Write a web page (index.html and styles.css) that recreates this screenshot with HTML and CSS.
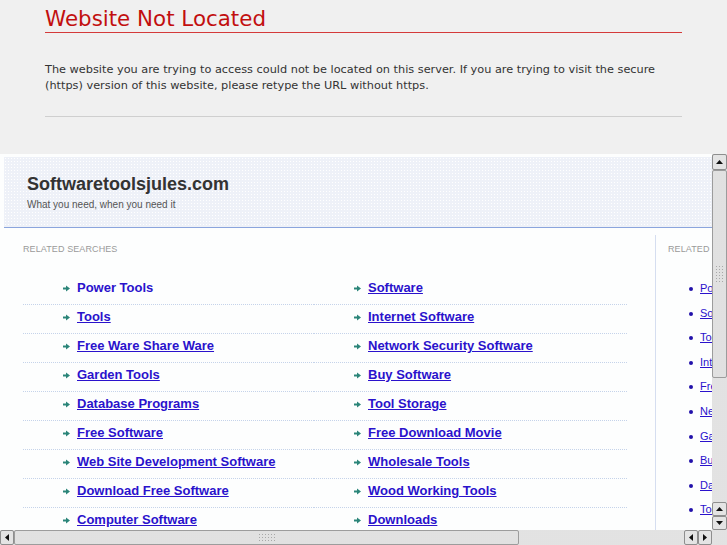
FILE: index.html
```html
<!DOCTYPE html>
<html lang="en">
<head>
    <meta charset="UTF-8">
    <title>Website Not Located</title>
    <link rel="stylesheet" href="styles.css">
</head>
<body>
    <div class="top">
        <div class="notice">
            <h1>Website Not Located</h1>
            <p>The website you are trying to access could not be located on this server. If you are trying to visit the secure (https) version of this website, please retype the URL without https.</p>
        </div>
    </div>

    <div class="frame">
        <div class="viewport">
            <div class="page">
                <div class="site-head">
                    <div class="site-name">Softwaretoolsjules.com</div>
                    <div class="tagline">What you need, when you need it</div>
                </div>

                <div class="content">
                    <div class="searches">
                        <div class="label">Related Searches</div>
                        <ul class="links">
                            <li><svg class="arrow" viewBox="0 0 7 7"><polygon points="0,2.5 3,2.5 3,0.5 7,3.5 3,6.5 3,4.5 0,4.5"/></svg><a class="hover">Power Tools</a></li>
                            <li><svg class="arrow" viewBox="0 0 7 7"><polygon points="0,2.5 3,2.5 3,0.5 7,3.5 3,6.5 3,4.5 0,4.5"/></svg><a>Software</a></li>
                            <li><svg class="arrow" viewBox="0 0 7 7"><polygon points="0,2.5 3,2.5 3,0.5 7,3.5 3,6.5 3,4.5 0,4.5"/></svg><a>Tools</a></li>
                            <li><svg class="arrow" viewBox="0 0 7 7"><polygon points="0,2.5 3,2.5 3,0.5 7,3.5 3,6.5 3,4.5 0,4.5"/></svg><a>Internet Software</a></li>
                            <li><svg class="arrow" viewBox="0 0 7 7"><polygon points="0,2.5 3,2.5 3,0.5 7,3.5 3,6.5 3,4.5 0,4.5"/></svg><a>Free Ware Share Ware</a></li>
                            <li><svg class="arrow" viewBox="0 0 7 7"><polygon points="0,2.5 3,2.5 3,0.5 7,3.5 3,6.5 3,4.5 0,4.5"/></svg><a>Network Security Software</a></li>
                            <li><svg class="arrow" viewBox="0 0 7 7"><polygon points="0,2.5 3,2.5 3,0.5 7,3.5 3,6.5 3,4.5 0,4.5"/></svg><a>Garden Tools</a></li>
                            <li><svg class="arrow" viewBox="0 0 7 7"><polygon points="0,2.5 3,2.5 3,0.5 7,3.5 3,6.5 3,4.5 0,4.5"/></svg><a>Buy Software</a></li>
                            <li><svg class="arrow" viewBox="0 0 7 7"><polygon points="0,2.5 3,2.5 3,0.5 7,3.5 3,6.5 3,4.5 0,4.5"/></svg><a>Database Programs</a></li>
                            <li><svg class="arrow" viewBox="0 0 7 7"><polygon points="0,2.5 3,2.5 3,0.5 7,3.5 3,6.5 3,4.5 0,4.5"/></svg><a>Tool Storage</a></li>
                            <li><svg class="arrow" viewBox="0 0 7 7"><polygon points="0,2.5 3,2.5 3,0.5 7,3.5 3,6.5 3,4.5 0,4.5"/></svg><a>Free Software</a></li>
                            <li><svg class="arrow" viewBox="0 0 7 7"><polygon points="0,2.5 3,2.5 3,0.5 7,3.5 3,6.5 3,4.5 0,4.5"/></svg><a>Free Download Movie</a></li>
                            <li><svg class="arrow" viewBox="0 0 7 7"><polygon points="0,2.5 3,2.5 3,0.5 7,3.5 3,6.5 3,4.5 0,4.5"/></svg><a>Web Site Development Software</a></li>
                            <li><svg class="arrow" viewBox="0 0 7 7"><polygon points="0,2.5 3,2.5 3,0.5 7,3.5 3,6.5 3,4.5 0,4.5"/></svg><a>Wholesale Tools</a></li>
                            <li><svg class="arrow" viewBox="0 0 7 7"><polygon points="0,2.5 3,2.5 3,0.5 7,3.5 3,6.5 3,4.5 0,4.5"/></svg><a>Download Free Software</a></li>
                            <li><svg class="arrow" viewBox="0 0 7 7"><polygon points="0,2.5 3,2.5 3,0.5 7,3.5 3,6.5 3,4.5 0,4.5"/></svg><a>Wood Working Tools</a></li>
                            <li><svg class="arrow" viewBox="0 0 7 7"><polygon points="0,2.5 3,2.5 3,0.5 7,3.5 3,6.5 3,4.5 0,4.5"/></svg><a>Computer Software</a></li>
                            <li><svg class="arrow" viewBox="0 0 7 7"><polygon points="0,2.5 3,2.5 3,0.5 7,3.5 3,6.5 3,4.5 0,4.5"/></svg><a>Downloads</a></li>
                        </ul>
                    </div>

                    <div class="related">
                        <div class="label">Related Searches</div>
                        <ul>
                            <li><a>Power Tools</a></li>
                            <li><a>Software</a></li>
                            <li><a>Tools</a></li>
                            <li><a>Internet Software</a></li>
                            <li><a>Free Ware Share Ware</a></li>
                            <li><a>Network Security Software</a></li>
                            <li><a>Garden Tools</a></li>
                            <li><a>Buy Software</a></li>
                            <li><a>Database Programs</a></li>
                            <li><a>Tool Storage</a></li>
                        </ul>
                    </div>
                </div>
            </div>
        </div>

        <!-- vertical scrollbar -->
        <div class="vscroll track">
            <div class="btn btn-top"><svg viewBox="0 0 7 4"><polygon points="0,4 3.5,0 7,4"/></svg></div>
            <div class="vthumb"><span class="grip"></span></div>
            <div class="fill"></div>
            <div class="btn"><svg viewBox="0 0 7 4"><polygon points="0,4 3.5,0 7,4"/></svg></div>
            <div class="btn"><svg viewBox="0 0 7 4"><polygon points="0,0 7,0 3.5,4"/></svg></div>
        </div>

        <!-- horizontal scrollbar -->
        <div class="hscroll track">
            <div class="btn"><svg class="side" viewBox="0 0 4 7"><polygon points="4,0 4,7 0,3.5"/></svg></div>
            <div class="hthumb"><span class="grip"></span></div>
            <div class="fill"></div>
            <div class="btn"><svg class="side" viewBox="0 0 4 7"><polygon points="4,0 4,7 0,3.5"/></svg></div>
            <div class="btn"><svg class="side" viewBox="0 0 4 7"><polygon points="0,0 0,7 4,3.5"/></svg></div>
        </div>

        <div class="corner track"></div>
    </div>
</body>
</html>
```

FILE: styles.css
```css
body {
    margin: 0;
    background-color: #f0f0f0;
    font-family: "DejaVu Sans", Verdana, sans-serif;
    overflow: hidden;
}

.top {
    height: 154px;
}

.notice {
    width: 637px;
    margin: 0 45px;
}

h1 {
    margin: 0;
    padding-top: 6px;
    font-size: 21.4px;
    line-height: 26px;
    font-weight: normal;
    color: #c20f0f;
    border-bottom: 1px solid #d43a3a;
}

.notice p {
    margin: 29px 0 0;
    padding-bottom: 22px;
    font-size: 11.3px;
    line-height: 16px;
    color: #333;
    border-bottom: 1px solid #cfcfcf;
}

/* framed parked page */
.frame {
    display: grid;
    grid-template-columns: 1fr 15px;
    grid-template-rows: 1fr 15px;
    height: 391px;
}

.viewport {
    overflow: hidden;
    background-color: #fdfefe;
    padding: 3px 0 0 4px;
    font-family: "Liberation Sans", Arial, sans-serif;
}

.page {
    width: 900px;
}

.site-head {
    box-sizing: border-box;
    height: 71px;
    padding: 16px 0 0 23px;
    background-color: #eef1f8;
    background-image: radial-gradient(#ffffff 0.6px, transparent 0.8px);
    background-size: 3px 3px;
    border-bottom: 1px solid #8ba5dd;
}

.site-name {
    font-size: 18px;
    line-height: 22px;
    font-weight: bold;
    color: #333;
}

.tagline {
    margin-top: 3px;
    font-size: 10px;
    line-height: 14px;
    color: #555;
}

.content {
    display: flex;
    margin-top: 7px;
}

.searches {
    box-sizing: border-box;
    width: 651px;
    padding: 8px 28px 0 19px;
}

.label {
    font-size: 9px;
    line-height: 12px;
    color: #9a9a9a;
    text-transform: uppercase;
    letter-spacing: 0.1px;
    white-space: nowrap;
}

.links {
    display: grid;
    grid-template-columns: 291px 1fr;
    margin: 21px 0 0;
    padding: 0;
    list-style: none;
}

.links li {
    display: flex;
    align-items: center;
    gap: 7px;
    padding: 4px 0 8px 40px;
    line-height: 16px;
    border-bottom: 1px dotted #c5d3ea;
}

.arrow {
    width: 7px;
    height: 7px;
    fill: #2b8579;
}

.links a {
    font-size: 13px;
    font-weight: bold;
    color: #2a12cc;
    text-decoration: underline;
}

.links a.hover {
    text-decoration: none;
}

.related {
    width: 200px;
    padding: 8px 0 0 12px;
    border-left: 1px solid #d5def0;
}

.related ul {
    margin: 21px 0 0;
    padding: 0 0 0 21px;
    list-style: none;
}

.related li {
    font-size: 11px;
    line-height: 24.6px;
    white-space: nowrap;
}

.related li::before {
    content: "";
    display: inline-block;
    width: 4px;
    height: 4px;
    margin-right: 7px;
    border-radius: 50%;
    background-color: #2211aa;
    vertical-align: middle;
}

.related a {
    color: #2a12cc;
    text-decoration: underline;
}

/* scrollbars */
.track {
    background-color: #ececec;
    background-image: radial-gradient(#d6d6d6 0.6px, transparent 0.8px);
    background-size: 2px 2px;
}

.vscroll {
    display: flex;
    flex-direction: column;
}

.hscroll {
    display: flex;
}

.fill {
    flex: 1;
}

.btn {
    box-sizing: border-box;
    flex: 0 0 14px;
    display: flex;
    align-items: center;
    justify-content: center;
    background-color: #e4e4e4;
    border: 1px solid #8e8e8e;
    border-radius: 2px;
}

.btn-top {
    flex-basis: 16px;
}

.btn svg {
    width: 7px;
    height: 4px;
    fill: #111;
}

.btn svg.side {
    width: 4px;
    height: 7px;
}

.vthumb,
.hthumb {
    box-sizing: border-box;
    display: flex;
    align-items: center;
    justify-content: center;
    background-color: #dadada;
    background-image: radial-gradient(#e8e8e8 0.6px, transparent 0.8px);
    background-size: 2px 2px;
    border: 1px solid #9c9c9c;
    border-radius: 2px;
}

.vthumb {
    height: 208px;
}

.hthumb {
    width: 505px;
}

.grip {
    width: 10px;
    height: 18px;
    background-image: radial-gradient(#a8a8a8 0.8px, transparent 1px);
    background-size: 3px 3px;
}

.hthumb .grip {
    width: 18px;
    height: 10px;
}
```
